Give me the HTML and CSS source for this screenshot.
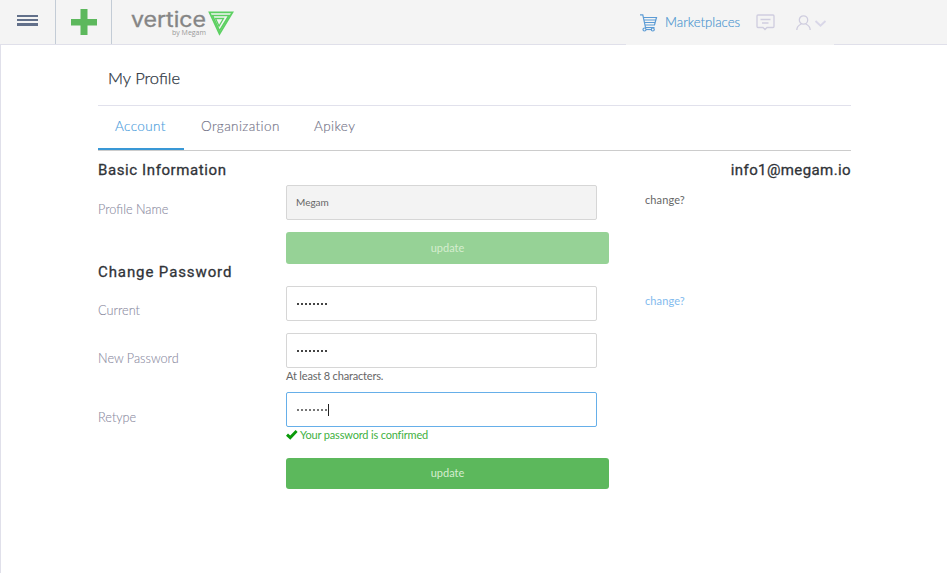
FILE: index.html
```html
<!DOCTYPE html>
<html lang="en">
<head>
<meta charset="utf-8">
<title>My Profile</title>
<link rel="stylesheet" href="styles.css">
</head>
<body>
<header class="topbar">
  <div class="cell">
    <svg width="21" height="11" viewBox="0 0 21 11"><path d="M0 0h21v2H0zM0 4h21v2H0zM0 8h21v3H0z" fill="#62708a"/></svg>
  </div>
  <div class="cell">
    <svg width="26" height="26" viewBox="0 0 26 26"><path d="M9.500 0h7v10H26v6.500h-9.500V26h-7v-9.500H0V10h9.500z" fill="#5cb85c"/></svg>
  </div>
  <svg class="logo" width="104" height="44" viewBox="0 0 104 44">
    <text class="logo-name" x="0" y="27" textLength="75" lengthAdjust="spacingAndGlyphs">vertice</text>
    <text class="logo-by" x="41" y="35" textLength="34" lengthAdjust="spacingAndGlyphs">by Megam</text>
    <g fill="none" stroke="#5dd062" stroke-width="1.700"><path d="M78.500 12.300H101.500L88.500 34z"/><path d="M81.500 15.500H98L88.500 31z"/><path d="M84.500 18.500H92.500L88 26z" stroke-width="1.300"/></g>
  </svg>
  <nav class="nav">
    <svg class="cart" width="18" height="18" viewBox="0 0 18 18" fill="none" stroke="#5b9bd5" stroke-width="1.200"><path d="M0 .800h2.800L5.500 13.500h9M3.200 3.500h13.300l-2 7.500H5M3.700 6h12M4.500 8.500h10.700"/><circle cx="4.500" cy="15.500" r="1.500"/><circle cx="12.800" cy="15.500" r="1.500"/><path d="M6 15.500h5.300"/></svg>
    <span class="market">Marketplaces</span>
    <svg class="chat" width="19" height="17" viewBox="0 0 19 17" fill="none" stroke="#cfcddf" stroke-width="1.300"><path d="M2 1h15q1 0 1 1v10.500q0 1-1 1h-6l-2 2-2-2H2q-1 0-1-1V2q0-1 1-1zM4.500 5.500h10M6 9h6.500"/></svg>
    <svg class="user" width="31" height="16" viewBox="0 0 31 16" fill="none" stroke="#cfcddf" stroke-width="1.300"><circle cx="7.500" cy="5" r="4.200"/><path d="M.800 15c0-3 2-5 4.500-6M14.200 15c0-3-2-5-4.500-6"/><path d="M19.500 6l5 4.800 5-4.800" stroke="#d9d7e8" stroke-width="1.900"/></svg>
  </nav>
</header>
<main class="page">
  <div class="content">
    <h1 class="title"><span>My Profile</span></h1>
    <div class="tabs">
      <a class="tab active"><span>Account</span></a>
      <a class="tab"><span>Organization</span></a>
      <a class="tab"><span>Apikey</span></a>
    </div>
    <div class="section">
      <h2 class="h-basic">Basic Information</h2>
      <h2 class="h-mail">info1@megam.io</h2>
    </div>
    <div class="row">
      <label>Profile Name</label>
      <div><div class="field disabled"><span>Megam</span></div></div>
      <span class="change dark">change?</span>
    </div>
    <div class="action"><button class="btn pale" type="button">update</button></div>
    <div class="section second"><h2>Change Password</h2></div>
    <div class="row">
      <label>Current</label>
      <div><div class="field"><i></i><i></i><i></i><i></i><i></i><i></i><i></i><i></i></div></div>
      <span class="change">change?</span>
    </div>
    <div class="row row-new">
      <label>New Password</label>
      <div><div class="field"><i></i><i></i><i></i><i></i><i></i><i></i><i></i><i></i></div>
        <p class="hint">At least 8 characters.</p></div>
    </div>
    <div class="row row-retype">
      <label>Retype</label>
      <div><div class="field focused"><i></i><i></i><i></i><i></i><i></i><i></i><i></i><i></i><b class="caret"></b></div>
        <p class="hint ok"><svg width="12" height="10" viewBox="0 0 12 10"><path d="M0 5.700L2 3.600l2.200 2L9.600 0 11.600 2 4.300 9.700z" fill="#0a9a0a"/></svg><span>Your password is confirmed</span></p></div>
    </div>
    <div class="action"><button class="btn strong" type="button">update</button></div>
  </div>
</main>
</body>
</html>
```
FILE: styles.css
```css
* { box-sizing: border-box; }
body { margin: 0; height: 573px; overflow: hidden; background: #fff; font-family: Lato, "Liberation Sans", sans-serif; font-weight: 300; color: #333; display: flex; flex-direction: column; }
h1, h2, p { margin: 0; }
svg { display: block; flex: none; }
span { white-space: nowrap; }
.topbar { height: 45px; flex: none; display: flex; background: #f4f4f4; border-bottom: 1px solid #e0e0ea; }
.cell { width: 56px; height: 44px; border-right: 1px solid #c3ccd6; display: flex; align-items: center; justify-content: center; padding-bottom: 3px; }
.cell + .cell { padding-bottom: 0; }
.logo { margin-left: 19px; }
.logo-name { font: 400 20.500px Inter, sans-serif; fill: #858585; stroke: #858585; stroke-width: .3px; }
.logo-by { font: 400 7px "Open Sans", sans-serif; fill: #999; }
.nav { width: 208px; height: 45px; margin-left: 391px; background: #f4f4f4; display: flex; align-items: center; padding: 0 8px 0 14px; }
.market { color: #4a94d0; font-size: 13.200px; line-height: 16px; width: 75px; margin: 0 16px 2px 7px; -webkit-text-stroke: .15px; }
.chat { margin-right: 21px; }
.page { flex: 1; border-left: 1px solid #e0e0ea; padding-left: 97px; }
.content { width: 753px; }
.title { height: 61px; padding: 23px 0 0 10px; border-bottom: 1px solid #e1e1ec; font-size: 16.500px; line-height: 20px; font-weight: 300; color: #2d353f; -webkit-text-stroke: .25px; }
.tabs { height: 45px; display: flex; border-bottom: 1px solid #ccc; }
.tab { height: 44px; padding: 11px 17px 0; font-size: 13.500px; line-height: 18px; letter-spacing: .4px; color: #747488; -webkit-text-stroke: .15px; }
.tab.active { width: 86px; color: #4a9cdc; border-bottom: 2px solid #3998d6; }
.tab:nth-child(2) { width: 113px; }
.section { height: 34px; display: flex; justify-content: space-between; padding-top: 9px; }
.section.second { height: 22px; padding-top: 0; }
h2 { font: 400 15px/20px Roboto, sans-serif; color: #303338; white-space: nowrap; letter-spacing: .9px; -webkit-text-stroke: .3px; }
.h-basic { letter-spacing: .6px; }
.h-mail { letter-spacing: .4px; }
.second h2 { line-height: 16px; }
.row { display: grid; grid-template-columns: 188px 323px 1fr; height: 47px; }
.row-new { height: 59px; }
.row-retype { height: 66px; }
label { font-size: 12.700px; line-height: 49px; color: #8b8b9f; -webkit-text-stroke: .1px; }
.row-new label, .row-retype label { line-height: 51px; }
.field { width: 311px; height: 35px; border: 1px solid #d6d6d6; border-radius: 2px; padding-left: 9px; display: flex; align-items: center; }
.field.disabled { background: #f3f3f3; font-size: 10px; font-weight: 400; color: #666; padding-bottom: 2px; }
.field.focused { border-color: #66afe9; }
.field i { width: 2px; height: 2px; background: #444; margin: 1px 2px 0 0; flex: none; }
.field i:first-child { margin-left: 1px; }
.focused i { background: #777; }
.caret { width: 1px; height: 12px; background: #222; margin-left: -1px; }
.change { margin-left: 36px; font-size: 11px; line-height: 29px; letter-spacing: .1px; font-weight: 400; color: #82bbee; }
.change.dark { color: #666; }
.action { padding-left: 188px; display: flex; }
.btn { width: 323px; height: 32px; border: 0; border-radius: 3px; font: 400 11px Lato, sans-serif; color: #d5edcf; padding: 0 0 2px; }
.pale { background: #96d296; }
.strong { background: #5cb85c; height: 31px; }
.hint { font-size: 11px; line-height: 16px; letter-spacing: -.17px; color: #666; font-weight: 400; }
.ok { color: #3fb13f; display: flex; align-items: center; gap: 2px; }
```
